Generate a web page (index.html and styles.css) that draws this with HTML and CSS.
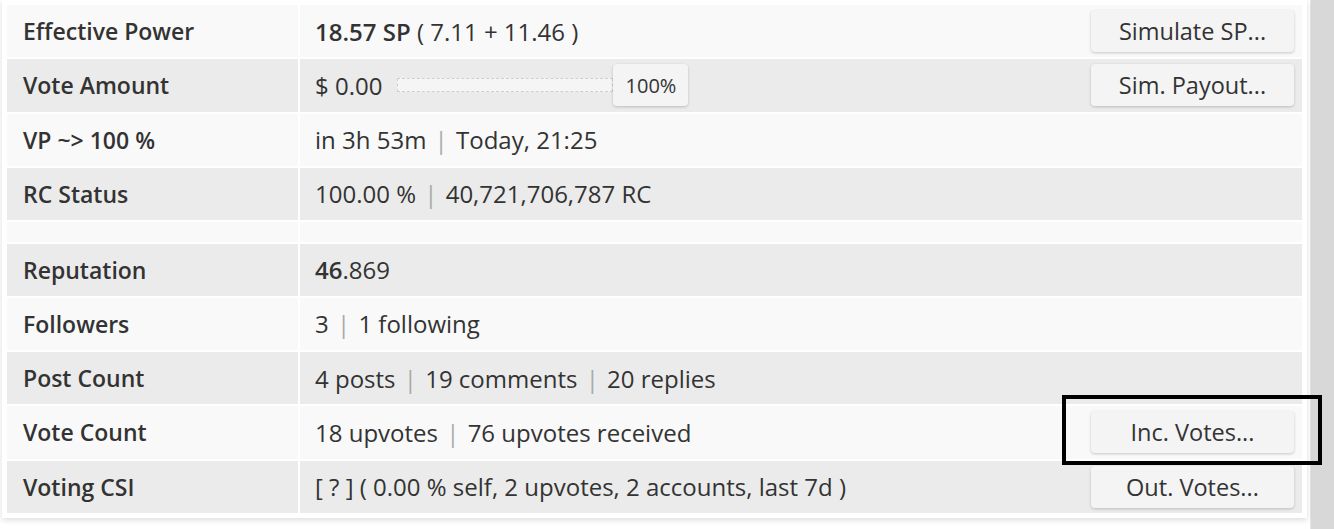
FILE: index.html
```html
<!DOCTYPE html>
<html>
<head>
<meta charset="utf-8">
<link rel="stylesheet" href="styles.css">
</head>
<body>
<div class="page">
  <div class="card">
    <table class="info">
      <tr class="light">
        <th>Effective Power</th>
        <td><div class="cell"><span><b>18.57 SP</b> ( 7.11 + 11.46 )</span><button class="btn">Simulate SP...</button></div></td>
      </tr>
      <tr class="dark">
        <th>Vote Amount</th>
        <td><div class="cell"><span class="amount">$ 0.00<span class="slider"><span class="track"></span><span class="thumb">100%</span></span></span><button class="btn">Sim. Payout...</button></div></td>
      </tr>
      <tr class="light">
        <th>VP ~&gt; 100 %</th>
        <td><div class="cell"><span>in 3h 53m <span class="sep">|</span> Today, 21:25</span></div></td>
      </tr>
      <tr class="dark">
        <th>RC Status</th>
        <td><div class="cell"><span>100.00 % <span class="sep">|</span> 40,721,706,787 RC</span></div></td>
      </tr>
      <tr class="light spacer">
        <th></th>
        <td></td>
      </tr>
      <tr class="dark">
        <th>Reputation</th>
        <td><div class="cell"><span><b>46</b>.869</span></div></td>
      </tr>
      <tr class="light">
        <th>Followers</th>
        <td><div class="cell"><span>3 <span class="sep">|</span> 1 following</span></div></td>
      </tr>
      <tr class="dark">
        <th>Post Count</th>
        <td><div class="cell"><span>4 posts <span class="sep">|</span> 19 comments <span class="sep">|</span> 20 replies</span></div></td>
      </tr>
      <tr class="light">
        <th>Vote Count</th>
        <td><div class="cell"><span>18 upvotes <span class="sep">|</span> 76 upvotes received</span><button class="btn">Inc. Votes...</button></div></td>
      </tr>
      <tr class="dark">
        <th>Voting CSI</th>
        <td><div class="cell"><span>[ ? ] ( 0.00 % self, 2 upvotes, 2 accounts, last 7d )</span><button class="btn">Out. Votes...</button></div></td>
      </tr>
    </table>
  </div>
  <div class="highlight"></div>
</div>
<div class="scrollbar"></div>
</body>
</html>
```
FILE: styles.css
```css
html, body {
  margin: 0;
  padding: 0;
  height: 529px;
  overflow: hidden;
  background: #fff;
}
body {
  display: flex;
  font-family: "Open Sans", "Liberation Sans", sans-serif;
  color: #333;
}
.page {
  position: relative;
  flex: 1;
  padding: 0 3px 0 2px;
}
.card {
  background: #fff;
  padding: 3px;
  box-shadow: 0 2px 6px rgba(0, 0, 0, 0.14);
}
.info {
  width: 100%;
  border-collapse: separate;
  border-spacing: 2px;
  font-size: 24px;
}
.info th {
  width: 259px;
  text-align: left;
  font-weight: 600;
  font-size: 23px;
  color: #333;
  padding: 0 16px;
  height: 52.25px;
  white-space: nowrap;
}
.info td {
  padding: 0 8px 0 15px;
  height: 52.25px;
}
.info tr.light th, .info tr.light td { background: #f9f9f9; }
.info tr.dark th, .info tr.dark td { background: #ebebeb; }
.info tr.spacer th, .info tr.spacer td { height: 19.5px; }
.cell {
  display: flex;
  align-items: center;
  justify-content: space-between;
  white-space: nowrap;
}
.cell b { font-weight: 600; }
.sep {
  color: #aaa;
  padding: 0 2px;
}
.amount {
  display: flex;
  align-items: center;
}
.slider {
  display: flex;
  align-items: center;
  margin-left: 15px;
}
.track {
  width: 214px;
  height: 12px;
  border: 1px dashed #cfcfcf;
  background: #f5f5f5;
}
.thumb {
  width: 75px;
  height: 42px;
  box-sizing: border-box;
  display: flex;
  align-items: center;
  justify-content: center;
  background: #f4f4f4;
  border-radius: 4px;
  box-shadow: 0 1px 3px rgba(0, 0, 0, 0.2);
  font-size: 20px;
  color: #333;
}
.btn {
  width: 203px;
  height: 42px;
  border: none;
  border-radius: 4px;
  background: #f4f4f4;
  box-shadow: 0 1px 3px rgba(0, 0, 0, 0.2);
  font-family: "Open Sans", "Liberation Sans", sans-serif;
  font-size: 23.5px;
  color: #333;
  padding: 0;
}
.highlight {
  position: absolute;
  left: 1062px;
  top: 395px;
  width: 252px;
  height: 62px;
  border: 4px solid #000;
}
.scrollbar {
  width: 23px;
  background: #d8d8d8;
  border-left: 1px solid #e6e6e6;
}
```
